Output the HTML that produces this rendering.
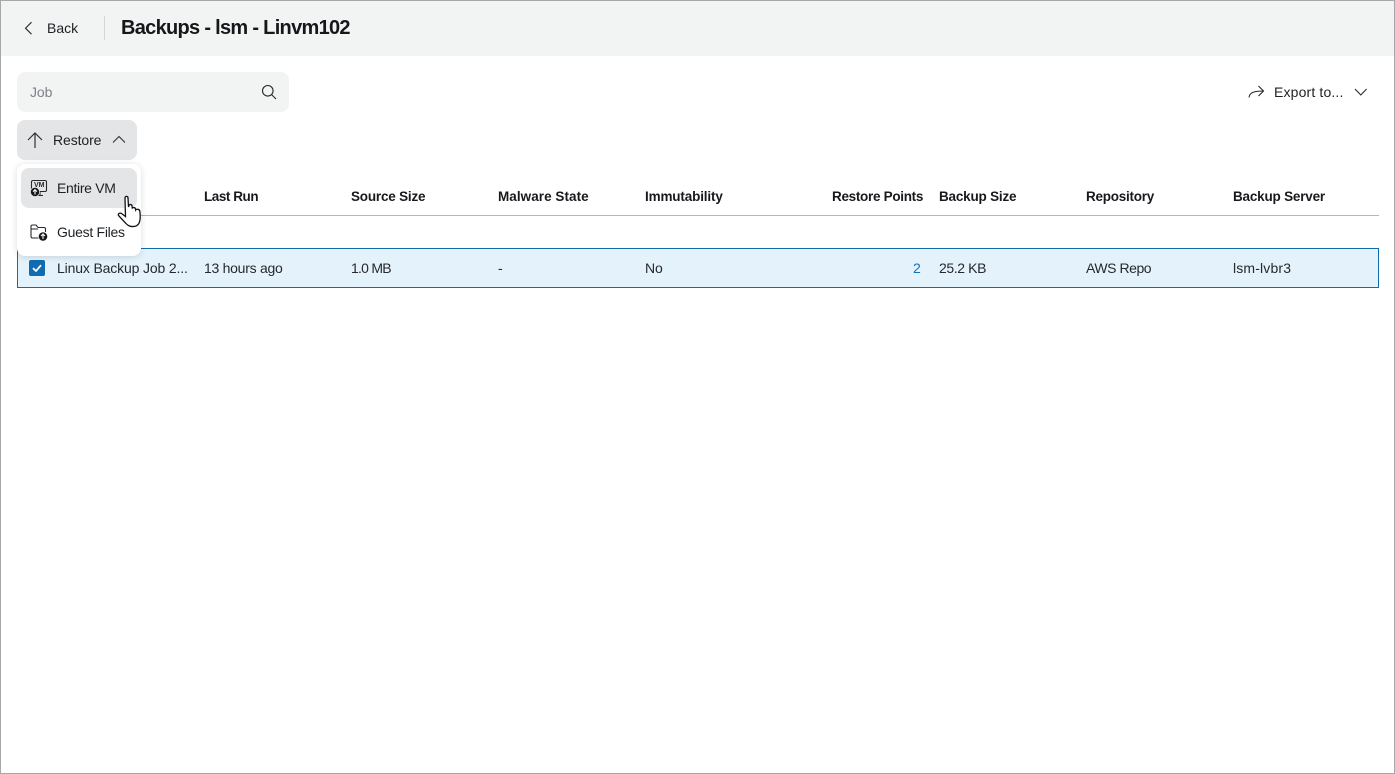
<!DOCTYPE html>
<html><head><meta charset="utf-8"><style>
html,body{margin:0;padding:0;background:#fff}
body{width:1395px;height:774px;position:relative;overflow:hidden;font-family:"Liberation Sans",sans-serif;font-size:14px;color:#1e2124}
.t{position:absolute;white-space:nowrap;line-height:18px}
.h{font-weight:bold;font-size:13.5px;letter-spacing:-.2px;top:188px;color:#17191c}
.c{top:259px;font-size:14px;letter-spacing:-.1px;color:#26292c}
svg{position:absolute;overflow:visible}
</style></head><body>
<div style="position:absolute;left:1px;top:1px;width:1393px;height:55px;background:#f2f4f4"></div>
<svg style="left:22px;top:20px" width="14" height="16" fill="none" stroke="#2a2d30" stroke-width="1.1"><path d="M9.500 2.200L3.500 8.200L9.500 14.200"/></svg>
<div class="t" style="left:47px;top:19px;font-size:14px">Back</div>
<div style="position:absolute;left:104px;top:16px;width:1px;height:24px;background:#d3d6d6"></div>
<div class="t" style="left:121px;top:16px;font-size:20px;line-height:24px;font-weight:bold;letter-spacing:-.7px;color:#15171a">Backups - lsm - Linvm102</div>

<div style="position:absolute;left:17px;top:72px;width:272px;height:40px;border-radius:8px;background:#f2f4f4"></div>
<div class="t" style="left:30px;top:83px;color:#7d8286;letter-spacing:-.1px">Job</div>
<svg style="left:261px;top:84px" width="16" height="16" fill="none" stroke="#26292c" stroke-width="1.1"><circle cx="6.800" cy="6.800" r="5.300"/><path d="M10.600 10.600L15 15"/></svg>

<svg style="left:1248px;top:84px" width="18" height="16" fill="none" stroke="#26292c" stroke-width="1.1"><path d="M1 13.500C1.500 9 5 7 15.500 7M10.500 2L15.500 7L10.500 12"/></svg>
<div class="t" style="left:1274px;top:83px;font-size:14px;letter-spacing:.15px">Export to...</div>
<svg style="left:1354px;top:87px" width="14" height="10" fill="none" stroke="#26292c" stroke-width="1.1"><path d="M1 2L6.800 8L12.600 2"/></svg>

<div style="position:absolute;left:17px;top:120px;width:120px;height:40px;border-radius:8px;background:#e3e5e6"></div>
<svg style="left:26px;top:131px" width="18" height="18" fill="none" stroke="#303336" stroke-width="1.2"><path d="M9 17V2M2 9L9 2L16 9"/></svg>
<div class="t" style="left:53px;top:131px;font-size:14px;letter-spacing:-.1px">Restore</div>
<svg style="left:112px;top:135px" width="14" height="10" fill="none" stroke="#303336" stroke-width="1.1"><path d="M1 7.500L7 1.500L13 7.500"/></svg>

<div class="t h" style="left:204px;letter-spacing:-.45px">Last Run</div>
<div class="t h" style="left:351px;letter-spacing:-.2px">Source Size</div>
<div class="t h" style="left:498px;letter-spacing:.05px">Malware State</div>
<div class="t h" style="left:645px;letter-spacing:-.15px">Immutability</div>
<div class="t h" style="left:832px;letter-spacing:-.3px">Restore Points</div>
<div class="t h" style="left:939px;letter-spacing:-.2px">Backup Size</div>
<div class="t h" style="left:1086px;letter-spacing:-.25px">Repository</div>
<div class="t h" style="left:1233px;letter-spacing:-.2px">Backup Server</div>
<div style="position:absolute;left:17px;top:215px;width:1362px;height:1px;background:#b4b6b7"></div>

<div style="position:absolute;left:17px;top:248px;width:1360px;height:38px;background:#e4f2fb;border:1px solid #0f6cb0"></div>
<div style="position:absolute;left:29px;top:260px;width:16px;height:16px;border-radius:2px;background:#0f6cb0"></div>
<svg style="left:29px;top:260px" width="16" height="16" fill="none" stroke="#fff" stroke-width="1.800"><path d="M4 8.200L7 11L12 5.200"/></svg>
<div class="t c" style="left:57px;letter-spacing:-.15px">Linux Backup Job 2...</div>
<div class="t c" style="left:204px;letter-spacing:-.27px">13 hours ago</div>
<div class="t c" style="left:351px;letter-spacing:-.75px">1.0 MB</div>
<div class="t c" style="left:498px">-</div>
<div class="t c" style="left:645px">No</div>
<div class="t c" style="left:913px;color:#1173b9">2</div>
<div class="t c" style="left:939px;letter-spacing:-.4px">25.2 KB</div>
<div class="t c" style="left:1086px;letter-spacing:-.45px">AWS Repo</div>
<div class="t c" style="left:1233px;letter-spacing:.15px">lsm-lvbr3</div>

<div style="position:absolute;left:17px;top:164px;width:124px;height:92px;border-radius:8px;background:#fff;box-shadow:0 1px 7px rgba(0,0,0,.14)"></div>
<div style="position:absolute;left:21px;top:168px;width:116px;height:40px;border-radius:8px;background:#e3e5e6"></div>
<svg style="left:30px;top:179px" width="18" height="20" fill="none" stroke="#26292c" stroke-width="1.100"><rect x="1.500" y="1.500" width="15" height="11" rx="1.500"/><path d="M10 13V16M8 16.500H13"/><circle cx="5" cy="13" r="4.600" fill="#15171a" stroke="#e3e5e6" stroke-width=".8"/><path d="M5 15.500V10.800M3 12.600L5 10.600L7 12.600" stroke="#fff"/></svg>
<div class="t" style="left:34px;top:182px;font-size:7px;line-height:8px;font-weight:bold;color:#26292c">VM</div>
<div class="t" style="left:57px;top:179px;font-size:14px;letter-spacing:-.32px">Entire VM</div>
<svg style="left:30px;top:224px" width="18" height="18" fill="none" stroke="#26292c" stroke-width="1.100"><path d="M9 14H2.500A1.500 1.500 0 0 1 1 12.500V2.500A1.500 1.500 0 0 1 2.500 1H6L8 3.500H14A1.500 1.500 0 0 1 15.500 5V8M1 5H8"/><circle cx="13" cy="12.500" r="4.600" fill="#15171a" stroke="#fff" stroke-width=".6"/><path d="M13 15V10.200M11 12L13 10L15 12" stroke="#fff"/></svg>
<div class="t" style="left:57px;top:223px;font-size:14px;letter-spacing:-.28px">Guest Files</div>

<svg style="left:117px;top:195px" width="25" height="33" fill="#fff" stroke="#111316" stroke-width="1.300"><path d="M8 3C8 .8 11 .8 11 3L11.500 12L12 10.500C12.500 9 15 9.300 15 11L15.300 13.500C15.800 12 18.300 12.300 18.500 14L18.700 15C19.300 13.800 22.500 14 22.800 16C23.500 21 23.500 26 21.500 29C19 32.500 12.500 32.500 9 28.500L1.500 20.500C.8 19 2.500 17.500 4.500 18.500L8.500 21.500Z"/></svg>

<div style="position:absolute;left:0;top:0;width:1393px;height:772px;border:1px solid #a6a8a8;pointer-events:none"></div>
</body></html>
